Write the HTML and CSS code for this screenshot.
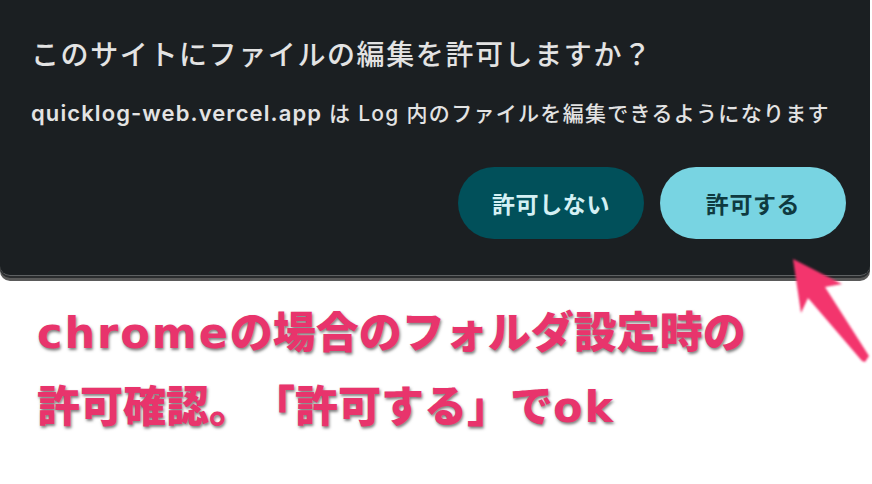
FILE: index.html
```html
<!DOCTYPE html>
<html lang="ja">
<head>
<meta charset="utf-8">
<link rel="stylesheet" href="styles.css">
</head>
<body>
<div class="page">
  <section class="panel">
    <h1 class="title">このサイトにファイルの編集を許可しますか？</h1>
    <p class="desc"><span class="site">quicklog-web.vercel.app</span> は Log 内のファイルを編集できるようになります</p>
    <div class="actions">
      <button class="btn btn-deny">許可しない</button>
      <button class="btn btn-allow">許可する</button>
    </div>
  </section>
  <div class="caption">
    <p class="cap-line"><span class="lat">chrome</span>の場合のフォルダ設定時の</p>
    <p class="cap-line">許可確認。「許可する」で<span class="lat">ok</span></p>
  </div>
  <svg class="arrow" width="872" height="484" viewBox="0 0 872 484">
    <defs>
      <filter id="soft" x="-20%" y="-20%" width="140%" height="140%">
        <feGaussianBlur stdDeviation="0.8"/>
      </filter>
    </defs>
    <polygon filter="url(#soft)" fill="#f3366d" points="793,259 842,284 825,287 869,356 865,362 862,361 808,298 801,313"/>
  </svg>
</div>
</body>
</html>
```

FILE: styles.css
```css
html, body {
  margin: 0;
  padding: 0;
  background: #ffffff;
}
.page {
  position: relative;
  width: 872px;
  height: 484px;
  overflow: hidden;
}
.panel {
  box-sizing: border-box;
  width: 870px;
  height: 276px;
  background: #1b1f22;
  border-radius: 0 0 10px 10px;
  border-bottom: 1px solid #5e6163;
  box-shadow: 0 2px 0 #2a2c2e, 0 5px 0 #5a5a5a;
  padding: 35px 24px 0 31px;
  display: flex;
  flex-direction: column;
}
.title {
  margin: 0;
  font-family: "Noto Sans CJK JP", sans-serif;
  font-weight: 500;
  font-size: 28px;
  line-height: 36px;
  letter-spacing: 1.6px;
  color: #e3e3e3;
}
.desc {
  margin: 27px 0 0 0;
  font-family: Inter, "Noto Sans CJK JP", sans-serif;
  font-weight: 500;
  font-size: 21px;
  line-height: 30px;
  letter-spacing: 1.3px;
  color: #e3e3e3;
}
.site {
  font-weight: 600;
  font-size: 22px;
  letter-spacing: 1.1px;
}
.actions {
  margin-top: 38px;
  display: flex;
  justify-content: flex-end;
  gap: 16px;
}
.btn {
  width: 186px;
  height: 72px;
  border: none;
  border-radius: 36px;
  font-family: "Noto Sans CJK JP", sans-serif;
  font-weight: 700;
  font-size: 23px;
  letter-spacing: 0.6px;
  padding: 0;
}
.btn-deny {
  background: #01505a;
  color: #d4f0f4;
}
.btn-allow {
  background: #78d4e2;
  color: #0f3a40;
}
.caption {
  margin-top: 18px;
  padding-left: 37px;
}
.cap-line {
  margin: 0;
  font-family: "Noto Sans CJK JP", sans-serif;
  font-weight: 900;
  font-size: 43px;
  line-height: 70px;
  color: #e8346c;
  -webkit-text-stroke: 7px #ffffff;
  paint-order: stroke fill;
  text-shadow: 1px 2px 3px rgba(0, 0, 0, 0.5);
  text-spacing-trim: space-all;
  white-space: nowrap;
}
.lat {
  font-family: "DejaVu Sans", sans-serif;
  font-weight: 700;
  letter-spacing: 2px;
}
.arrow {
  position: absolute;
  top: 0;
  left: 0;
  pointer-events: none;
}
```
